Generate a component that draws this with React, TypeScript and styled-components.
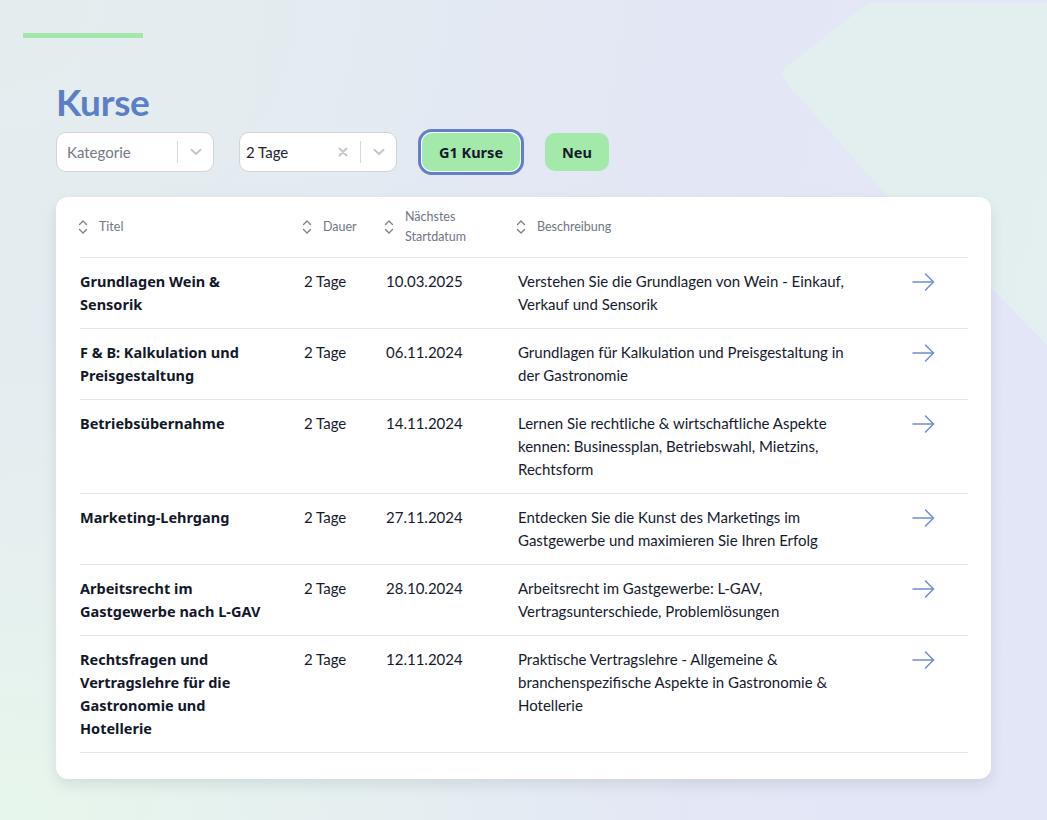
import React from 'react';
import styled, { createGlobalStyle } from 'styled-components';

const GlobalStyle = createGlobalStyle`
  html, body {
    margin: 0;
    padding: 0;
  }
  body {
    font-family: Lato, "Noto Sans", "Liberation Sans", sans-serif;
    color: #151b2e;
    background: #e4e8f3;
  }
`;

const boldFont = `"Noto Sans", Lato, "Liberation Sans", sans-serif`;

// Page background with soft gradients
const Page = styled.div`
  position: relative;
  width: 1047px;
  height: 820px;
  overflow: hidden;
  background:
    radial-gradient(ellipse 700px 500px at 0% 100%, #e7f6ec 0%, rgba(231, 246, 236, 0) 100%),
    radial-gradient(ellipse 600px 500px at 0% 0%, #e4edee 0%, rgba(228, 237, 238, 0) 100%),
    linear-gradient(100deg, #e4ebf1 0%, #e3e7f5 60%, #e3e6f7 100%);
`;

const Blob = styled.svg`
  position: absolute;
  top: 0;
  left: 0;
  pointer-events: none;
`;

const Content = styled.div`
  position: relative;
  padding: 33px 0 0 23px;
`;

const AccentBar = styled.div`
  width: 120px;
  height: 5px;
  background: #a3e8aa;
`;

const Main = styled.main`
  margin-left: 33px;
  width: 935px;
`;

const Title = styled.h1`
  margin: 42px 0 0;
  font-size: 37px;
  line-height: 44px;
  font-weight: 700;
  color: #5b7fc5;
  letter-spacing: -0.3px;
`;

const Filters = styled.div`
  display: flex;
  align-items: center;
  gap: 25px;
  margin-top: 5px;
  height: 46px;
`;

const SelectBox = styled.div`
  display: flex;
  align-items: center;
  width: 158px;
  height: 40px;
  box-sizing: border-box;
  background: #fff;
  border: 1px solid #cfd4da;
  border-radius: 10px;
`;

const SelectValue = styled.div<{ $placeholder?: boolean }>`
  flex: 1;
  padding-left: ${(p) => (p.$placeholder ? '10px' : '6px')};
  font-size: 15px;
  color: ${(p) => (p.$placeholder ? '#737a86' : '#1c2233')};
`;

const Indicator = styled.div`
  width: 35px;
  height: 38px;
  display: flex;
  align-items: center;
  justify-content: center;
  color: #c4c8cd;
`;

const Separator = styled.span`
  width: 1px;
  height: 22px;
  background: #d6d9dd;
`;

const Button = styled.button<{ $focused?: boolean }>`
  height: 38px;
  padding: 0 17px;
  border: none;
  border-radius: 10px;
  background: #a3e9aa;
  font-family: ${boldFont};
  font-size: 14.5px;
  font-weight: 700;
  color: #141a2c;
  box-shadow: ${(p) => (p.$focused ? '0 0 0 1px #fff, 0 0 0 4px #5f7fc8' : 'none')};
`;

const Card = styled.section`
  margin-top: 22px;
  background: #fff;
  border-radius: 12px;
  box-shadow: 0 6px 14px rgba(30, 40, 60, 0.1);
  padding: 0 23px 26px 24px;
`;

const Table = styled.table`
  width: 888px;
  table-layout: fixed;
  border-collapse: collapse;
`;

const Th = styled.th<{ $w: number }>`
  width: ${(p) => p.$w}px;
  height: 60px;
  padding: 0;
  text-align: left;
  font-weight: 400;
  border-bottom: 1px solid #e3e5e8;
`;

const HeadLabel = styled.div`
  display: flex;
  align-items: center;
  gap: 11px;
  margin-left: -2px;
  font-size: 12.5px;
  line-height: 20px;
  color: #707683;
  white-space: pre-line;
`;

const Td = styled.td<{ $pr?: number }>`
  padding: 12px ${(p) => p.$pr ?? 0}px 12px 0;
  vertical-align: top;
  font-size: 15px;
  line-height: 23px;
  color: #151b2e;
  border-bottom: 1px solid #e3e5e8;
`;

const TitleCell = styled(Td)`
  font-family: ${boldFont};
  font-size: 14.5px;
  font-weight: 700;
  color: #121829;
`;

const ArrowLink = styled.a`
  display: inline-flex;
  padding-top: 2px;
  color: #6e8ed0;
`;

const SortIcon = () => (
  <svg width="10" height="16" viewBox="0 0 10 16" fill="none" stroke="#7b808a" strokeWidth="1.3" strokeLinecap="round" strokeLinejoin="round">
    <path d="M1.5 5.5 L5 2 L8.5 5.5" />
    <path d="M1.5 10.5 L5 14 L8.5 10.5" />
  </svg>
);

const Chevron = () => (
  <svg width="12" height="8" viewBox="0 0 12 8" fill="none" stroke="currentColor" strokeWidth="2" strokeLinecap="round" strokeLinejoin="round">
    <path d="M1.5 1.8 L6 6 L10.5 1.8" />
  </svg>
);

const Cross = () => (
  <svg width="10" height="10" viewBox="0 0 10 10" fill="none" stroke="currentColor" strokeWidth="2" strokeLinecap="round">
    <path d="M1.5 1.5 L8.5 8.5 M8.5 1.5 L1.5 8.5" />
  </svg>
);

const Arrow = () => (
  <svg width="23" height="20" viewBox="0 0 23 20" fill="none" stroke="currentColor" strokeWidth="1.5" strokeLinecap="round" strokeLinejoin="round">
    <path d="M1 10 H21.5" />
    <path d="M13.5 2 L21.5 10 L13.5 18" />
  </svg>
);

const columns = [
  { label: 'Titel', w: 224 },
  { label: 'Dauer', w: 82 },
  { label: 'Nächstes\nStartdatum', w: 132 },
  { label: 'Beschreibung', w: 394 },
  { label: '', w: 56 },
];

const courses = [
  {
    title: 'Grundlagen Wein & Sensorik',
    duration: '2 Tage',
    start: '10.03.2025',
    text: 'Verstehen Sie die Grundlagen von Wein - Einkauf, Verkauf und Sensorik',
  },
  {
    title: 'F & B: Kalkulation und Preisgestaltung',
    duration: '2 Tage',
    start: '06.11.2024',
    text: 'Grundlagen für Kalkulation und Preisgestaltung in der Gastronomie',
  },
  {
    title: 'Betriebsübernahme',
    duration: '2 Tage',
    start: '14.11.2024',
    text: 'Lernen Sie rechtliche & wirtschaftliche Aspekte kennen: Businessplan, Betriebswahl, Mietzins, Rechtsform',
  },
  {
    title: 'Marketing-Lehrgang',
    duration: '2 Tage',
    start: '27.11.2024',
    text: 'Entdecken Sie die Kunst des Marketings im Gastgewerbe und maximieren Sie Ihren Erfolg',
  },
  {
    title: 'Arbeitsrecht im Gastgewerbe nach L-GAV',
    duration: '2 Tage',
    start: '28.10.2024',
    text: 'Arbeitsrecht im Gastgewerbe: L-GAV, Vertragsunterschiede, Problemlösungen',
  },
  {
    title: 'Rechtsfragen und Vertragslehre für die Gastronomie und Hotellerie',
    duration: '2 Tage',
    start: '12.11.2024',
    text: 'Praktische Vertragslehre - Allgemeine & branchenspezifische Aspekte in Gastronomie & Hotellerie',
  },
];

const App = () => {
  return (
    <Page>
      <GlobalStyle />
      <Blob width="1047" height="820" viewBox="0 0 1047 820">
        <path
          d="M868 3 H1047 V345 L995 292 L887 196 L786 82 Q778 74 786 67 Z"
          fill="#e2efee"
          opacity="0.9"
        />
      </Blob>
      <Content>
        <AccentBar />
        <Main>
          <Title>Kurse</Title>
          <Filters>
            <SelectBox>
              <SelectValue $placeholder>Kategorie</SelectValue>
              <Separator />
              <Indicator>
                <Chevron />
              </Indicator>
            </SelectBox>
            <SelectBox>
              <SelectValue>2 Tage</SelectValue>
              <Indicator>
                <Cross />
              </Indicator>
              <Separator />
              <Indicator>
                <Chevron />
              </Indicator>
            </SelectBox>
            <Button $focused>G1 Kurse</Button>
            <Button>Neu</Button>
          </Filters>
          <Card>
            <Table>
              <thead>
                <tr>
                  {columns.map((c, i) => (
                    <Th key={i} $w={c.w}>
                      {c.label && (
                        <HeadLabel>
                          <SortIcon />
                          <span>{c.label}</span>
                        </HeadLabel>
                      )}
                    </Th>
                  ))}
                </tr>
              </thead>
              <tbody>
                {courses.map((course, i) => (
                  <tr key={i}>
                    <TitleCell $pr={24}>{course.title}</TitleCell>
                    <Td>{course.duration}</Td>
                    <Td>{course.start}</Td>
                    <Td $pr={44}>{course.text}</Td>
                    <Td>
                      <ArrowLink href="#">
                        <Arrow />
                      </ArrowLink>
                    </Td>
                  </tr>
                ))}
              </tbody>
            </Table>
          </Card>
        </Main>
      </Content>
    </Page>
  );
};

export default App;
